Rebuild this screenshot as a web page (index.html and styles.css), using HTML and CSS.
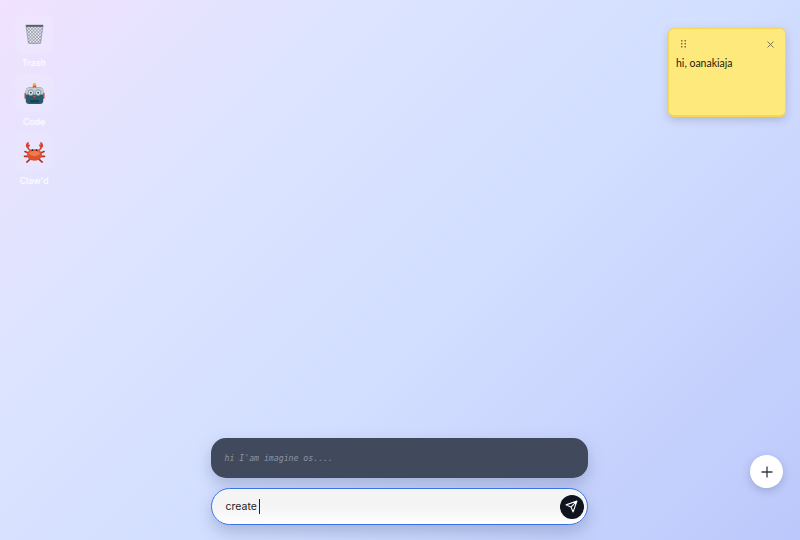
FILE: index.html
```html
<!DOCTYPE html>
<html lang="en">
<head>
    <meta charset="UTF-8">
    <meta name="viewport" content="width=device-width, initial-scale=1.0">
    <title>imagine os</title>
    <link rel="stylesheet" href="styles.css">
</head>
<body>
    <div class="desktop-icons">
        <div class="desktop-icon">
            <div class="icon-tile">
                <svg width="21" height="22" viewBox="0 0 24 24">
                    <defs>
                        <pattern id="mesh" width="2.6" height="2.6" patternUnits="userSpaceOnUse" patternTransform="rotate(45)">
                            <rect width="2.6" height="2.6" fill="#e6e8f2"/>
                            <path d="M0 0H2.6M0 0V2.6" stroke="#6f7682" stroke-width="1"/>
                        </pattern>
                    </defs>
                    <path d="M2.5 3.5H21.5L19 22.5Q12 23.6 5 22.5Z" fill="url(#mesh)" stroke="#6c7480" stroke-width=".6"/>
                    <path d="M2 1.500H22V3.800H2Z" fill="#5b626c"/>
                </svg>
            </div>
            <div class="icon-label">Trash</div>
        </div>
        <div class="desktop-icon">
            <div class="icon-tile">
                <svg width="21" height="23" viewBox="0 0 24 26">
                    <circle cx="12" cy="3" r="2" fill="#f1b52c"/>
                    <rect x="10" y="4" width="4" height="3" fill="#d8533f"/>
                    <rect x="0.5" y="12" width="3" height="7" rx="1" fill="#c6563f"/>
                    <rect x="20.500" y="12" width="3" height="7" rx="1" fill="#c6563f"/>
                    <rect x="2" y="6" width="20" height="19" rx="4" fill="#29596b"/>
                    <path d="M2 10a4 4 0 0 1 4-4H18a4 4 0 0 1 4 4v4H2Z" fill="#c3ced4"/>
                    <circle cx="7.800" cy="12" r="3.200" fill="#dfe7ea" stroke="#6d8a96" stroke-width="1"/>
                    <circle cx="16.200" cy="12" r="3.200" fill="#dfe7ea" stroke="#6d8a96" stroke-width="1"/>
                    <circle cx="7.800" cy="12" r="1.100" fill="#27414e"/>
                    <circle cx="16.200" cy="12" r="1.100" fill="#27414e"/>
                    <circle cx="12" cy="16.500" r="1.200" fill="#d8533f"/>
                    <path d="M7 20.500H17V23H7Z" fill="#173e4c"/>
                </svg>
            </div>
            <div class="icon-label">Code</div>
        </div>
        <div class="desktop-icon">
            <div class="icon-tile">
                <svg width="23" height="23" viewBox="0 0 24 24" fill="none" stroke-linecap="round">
                    <path d="M7 13 2 11M7 16 1.500 16M8 18.500 4 22M17 13 22 11M17 16 22.500 16M16 18.500 20 22" stroke="#b5301c" stroke-width="1.700"/>
                    <path d="M9 10C5 9 4 6 5 3M15 10C19 9 20 6 19 3" stroke="#c9351f" stroke-width="1.500"/>
                    <path d="M6 1C2.500 1.500 2 6.500 5 7.500 7 6 7.500 5 7 3.500L5.500 4.500Z" fill="#d8412a"/>
                    <path d="M18 1C21.500 1.500 22 6.500 19 7.500 17 6 16.500 5 17 3.500L18.500 4.500Z" fill="#d8412a"/>
                    <ellipse cx="12" cy="14.500" rx="8" ry="6" fill="#e2512f"/>
                    <ellipse cx="12" cy="13" rx="5.500" ry="2.800" fill="#f0794d"/>
                    <circle cx="9.800" cy="9.500" r="1" fill="#2a1a14"/>
                    <circle cx="14.200" cy="9.500" r="1" fill="#2a1a14"/>
                </svg>
            </div>
            <div class="icon-label">Claw'd</div>
        </div>
    </div>

    <div class="note">
        <div class="note-head">
            <svg class="note-grip" width="6" height="9" viewBox="0 0 6 9" fill="#77704a">
                <rect x="0" y="0" width="1.500" height="1.500"/><rect x="3.500" y="0" width="1.500" height="1.500"/>
                <rect x="0" y="3" width="1.500" height="1.500"/><rect x="3.500" y="3" width="1.500" height="1.500"/>
                <rect x="0" y="6" width="1.500" height="1.500"/><rect x="3.500" y="6" width="1.500" height="1.500"/>
            </svg>
            <svg width="7" height="7" viewBox="0 0 7 7" stroke="#6b6545" stroke-width="0.900"><path d="M.5.500 6.500 6.500M6.500.500.500 6.500"/></svg>
        </div>
        <div class="note-text">hi, oanakiaja</div>
    </div>

    <div class="chat">
        <div class="chat-bubble">hi I'am imagine os....</div>
        <div class="chat-input">
            <span class="chat-value">create</span><span class="caret"></span>
            <button class="send-btn">
                <svg width="13" height="13" viewBox="0 0 24 24" fill="none" stroke="#fff" stroke-width="2" stroke-linejoin="round" stroke-linecap="round">
                    <path d="M22 2 11 13M22 2 15 22 11 13 2 9Z"/>
                </svg>
            </button>
        </div>
    </div>

    <button class="add-btn">
        <svg width="12" height="12" viewBox="0 0 12 12" stroke="#333a45" stroke-width="1.300"><path d="M6 .5V11.500M.5 6H11.500"/></svg>
    </button>
</body>
</html>
```

FILE: styles.css
```css
* {
    box-sizing: border-box;
}

html, body {
    height: 100%;
}

body {
    margin: 0;
    overflow: hidden;
    font-family: Inter, "Liberation Sans", sans-serif;
    background: linear-gradient(135deg, #f1e2fe 0%, #dce4ff 28%, #d3dfff 55%, #bcc8fb 100%);
    display: flex;
    flex-direction: column;
    justify-content: flex-end;
    align-items: center;
}

.desktop-icons {
    position: absolute;
    left: 15px;
    top: 15px;
    display: flex;
    flex-direction: column;
    gap: 7px;
}

.desktop-icon {
    width: 38px;
    display: flex;
    flex-direction: column;
    align-items: center;
}

.icon-tile {
    width: 38px;
    height: 38px;
    border-radius: 8px;
    background: rgba(255, 255, 255, 0.1);
    display: flex;
    align-items: center;
    justify-content: center;
}

.icon-label {
    margin-top: 5px;
    height: 9px;
    line-height: 9px;
    font-size: 9px;
    color: #fff;
    opacity: 0.9;
    white-space: nowrap;
    text-shadow: 0 0 3px rgba(255, 255, 255, 0.6);
}

.note {
    position: absolute;
    left: 668px;
    top: 28px;
    width: 118px;
    height: 89px;
    padding: 11px 11px 8px 7px;
    background: #fee97c;
    border: 1px solid #f6d653;
    border-bottom-width: 2px;
    border-radius: 6px;
    box-shadow: 0 3px 8px rgba(90, 90, 120, 0.28);
}

.note-head {
    display: flex;
    justify-content: space-between;
    align-items: center;
    padding-left: 5px;
}

.note-text {
    margin-top: 7px;
    font-family: Lato, sans-serif;
    font-size: 10.5px;
    line-height: 14px;
    color: #1d1a10;
}

.chat {
    width: 377px;
    margin-right: 2px;
    margin-bottom: 15px;
    display: flex;
    flex-direction: column;
    gap: 10px;
}

.chat-bubble {
    height: 40px;
    padding-left: 14px;
    display: flex;
    align-items: center;
    background: #414a5c;
    border-radius: 15px;
    font-family: "DejaVu Sans Mono", monospace;
    font-style: italic;
    font-size: 8.2px;
    color: #8d94a0;
    box-shadow: 0 7px 16px rgba(90, 105, 150, 0.35);
}

.chat-input {
    height: 37px;
    padding: 0 3px 0 14px;
    display: flex;
    align-items: center;
    background: linear-gradient(180deg, #f4f4f5 0%, #f5f5f6 55%, #ffffff 100%);
    border: 1.5px solid #3b73e4;
    border-radius: 19px;
    box-shadow: 0 7px 16px rgba(90, 105, 150, 0.35);
}

.chat-value {
    font-size: 10.5px;
    color: #1b1d22;
}

.caret {
    width: 1px;
    height: 15px;
    margin-left: 2px;
    background: #222;
}

.send-btn {
    margin-left: auto;
    width: 24px;
    height: 24px;
    padding: 0;
    border: none;
    border-radius: 50%;
    background: #10141f;
    display: flex;
    align-items: center;
    justify-content: center;
}

.add-btn {
    position: absolute;
    left: 750px;
    top: 455px;
    width: 33px;
    height: 33px;
    padding: 0;
    border: none;
    border-radius: 50%;
    background: #fff;
    box-shadow: 0 3px 8px rgba(80, 90, 130, 0.3);
    display: flex;
    align-items: center;
    justify-content: center;
}
```
